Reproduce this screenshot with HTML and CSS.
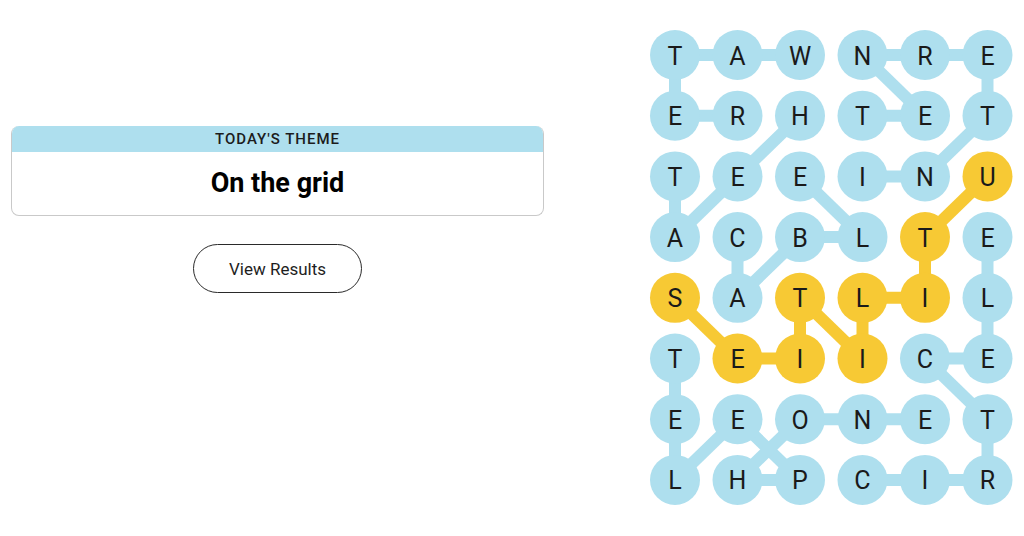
FILE: index.html
```html
<!DOCTYPE html>
<html lang="en">
<head>
  <meta charset="UTF-8">
  <title>Strands</title>
  <link rel="stylesheet" href="styles.css">
</head>
<body>
  <div class="side">
    <div class="theme-card">
      <div class="theme-label">Today's theme</div>
      <div class="theme-title">On the grid</div>
    </div>
    <button class="results-btn">View Results</button>
  </div>

  <svg id="board" class="board" width="400" height="536" viewBox="0 0 400 536"></svg>

  <script>
    const board = document.getElementById('board');
    const NS = 'http://www.w3.org/2000/svg';

    const letters = [
      'TAWNRE',
      'ERHTET',
      'TEEINU',
      'ACBLTE',
      'SATLIL',
      'TEIICE',
      'EEONET',
      'LHPCIR'
    ];

    // found words as [row, col] paths
    const words = [
      { path: [[0,2],[0,1],[0,0],[1,0],[1,1]] },
      { path: [[2,3],[2,4],[1,5],[0,5],[0,4],[0,3],[1,4],[1,3]] },
      { path: [[1,2],[2,1],[3,0],[2,0]] },
      { path: [[3,1],[4,1],[3,2],[3,3],[2,2]] },
      { path: [[3,5],[4,5],[5,5],[5,4],[6,5],[7,5],[7,4],[7,3]] },
      { path: [[5,0],[6,0],[7,0],[6,1],[7,2],[7,1],[6,2],[6,3],[6,4]] },
      { path: [[2,5],[3,4],[4,4],[4,3],[5,3],[4,2],[5,2],[5,1],[4,0]], spangram: true }
    ];

    const colX = c => 51 + c * 62.5;
    const rowY = r => 55 + r * 60.7;

    function el(name, attrs) {
      const node = document.createElementNS(NS, name);
      for (const k in attrs) node.setAttribute(k, attrs[k]);
      return node;
    }

    const colorOf = {};
    const lineLayer = el('g', {});
    const dotLayer = el('g', {});
    board.appendChild(lineLayer);
    board.appendChild(dotLayer);

    for (const word of words) {
      const color = word.spangram ? '#f7c934' : '#aedfee';
      for (let i = 0; i < word.path.length; i++) {
        const [r, c] = word.path[i];
        colorOf[r + '-' + c] = color;
        if (i === 0) continue;
        const [pr, pc] = word.path[i - 1];
        lineLayer.appendChild(el('line', {
          x1: colX(pc), y1: rowY(pr), x2: colX(c), y2: rowY(r),
          stroke: color, 'stroke-width': 12
        }));
      }
    }

    letters.forEach((row, r) => {
      [...row].forEach((ch, c) => {
        dotLayer.appendChild(el('circle', {
          cx: colX(c), cy: rowY(r), r: 25, fill: colorOf[r + '-' + c] || '#fff'
        }));
        const t = el('text', { x: colX(c), y: rowY(r) + 1, class: 'letter' });
        t.textContent = ch;
        dotLayer.appendChild(t);
      });
    });
  </script>
</body>
</html>
```

FILE: styles.css
```css
body {
  margin: 0;
  height: 536px;
  display: flex;
  background: #fff;
  color: #121212;
  font-family: Roboto, "Liberation Sans", Arial, sans-serif;
  overflow: hidden;
}

.side {
  width: 533px;
  margin: 126px 0 0 11px;
  display: flex;
  flex-direction: column;
  align-items: center;
}

.theme-card {
  width: 100%;
  box-sizing: border-box;
  border: 1px solid #c9c9c9;
  border-top: none;
  border-radius: 8px;
  overflow: hidden;
  text-align: center;
}

.theme-label {
  background: #aedfee;
  height: 26px;
  line-height: 27px;
  font-size: 15px;
  font-weight: 500;
  letter-spacing: 1px;
  text-transform: uppercase;
  color: #1c1c1c;
}

.theme-title {
  height: 63px;
  line-height: 63px;
  font-size: 27px;
  font-weight: bold;
  color: #000;
}

.results-btn {
  margin-top: 28px;
  width: 169px;
  height: 49px;
  border: 1px solid #2a2a2a;
  border-radius: 25px;
  background: #fff;
  font-family: Roboto, "Liberation Sans", Arial, sans-serif;
  font-size: 17px;
  color: #1e1e1e;
  cursor: pointer;
}

.board {
  flex: none;
  margin-left: auto;
}

.letter {
  font-family: Roboto, "Liberation Sans", Arial, sans-serif;
  font-size: 25px;
  fill: #1a1a1a;
  text-anchor: middle;
  dominant-baseline: central;
}
```
